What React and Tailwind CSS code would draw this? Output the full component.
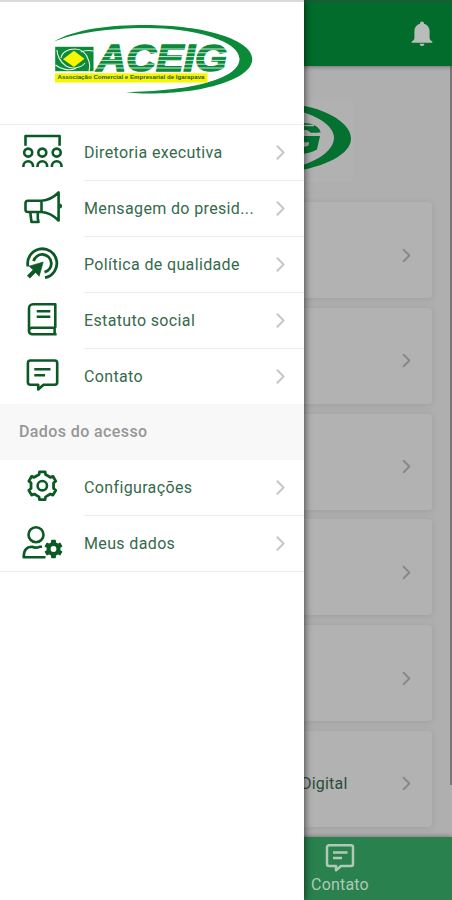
import { ChevronRight } from 'lucide-react';

// Gear outline with soft teeth, centred on cx/cy
function gearPath(cx, cy, outer, inner, teeth) {
  const step = (Math.PI * 2) / teeth;
  const points = [];
  for (let i = 0; i < teeth; i++) {
    const a = i * step - Math.PI / 2;
    [[-0.27, inner], [-0.19, outer], [0.19, outer], [0.27, inner]].forEach(([k, r]) => {
      points.push(`${(cx + r * Math.cos(a + k * step)).toFixed(2)} ${(cy + r * Math.sin(a + k * step)).toFixed(2)}`);
    });
  }
  return `M${points.join('L')}Z`;
}

function MenuIcon({ children }) {
  return (
    <svg viewBox="0 0 48 40" className="h-10 w-12 shrink-0" fill="none" stroke="#0b5a26" strokeWidth="2.6" strokeLinejoin="round">
      {children}
    </svg>
  );
}

const icons = {
  board: (
    <MenuIcon>
      <path d="M7.5 12.8V3H41.6V12.8" />
      {[10.2, 24.3, 38.7].map((x) => (
        <g key={x}>
          <circle cx={x} cy="19.6" r="4" />
          <path d={`M${x - 4.8} 34v-1a4.8 4.8 0 0 1 9.6 0v1`} />
        </g>
      ))}
    </MenuIcon>
  ),
  megaphone: (
    <MenuIcon>
      <path d="M23.5 11.7H10a2.5 2.5 0 0 0-2.5 2.5V20.5a2.5 2.5 0 0 0 2.5 2.5H23.5ZM23.5 11.7C30 11.3 36 8 40.6 3.5V31.5C36 27 30 23.5 23.5 23M12.3 23.5L13.5 33H20.5L19.8 29.5V23.5" />
      <path d="M41.5 14.5a2.5 2.5 0 0 1 0 5z" fill="#0b5a26" stroke="none" />
    </MenuIcon>
  ),
  target: (
    <MenuIcon>
      <path d="M10 21.5A14.6 14.6 0 1 1 27 32.7M15.6 16.2A9 9 0 1 1 26.5 27.2" strokeWidth="2.8" />
      <path d="M25.2 17L11 21.2L15.2 24.8L9.3 30.6L11.8 33.2L17.6 27.4L21.2 31.3Z" fill="#0b5a26" strokeWidth="0.6" />
    </MenuIcon>
  ),
  book: (
    <MenuIcon>
      <path d="M37.3 26.7V3.3H15a4 4 0 0 0-4 4V29.8M37.3 26.7H14.2a3.2 3.2 0 0 0 0 6.5H38.6M36.6 26.7V33M18.7 10.3H32.3M18.7 15.7H32.3" />
    </MenuIcon>
  ),
  chat: (
    <MenuIcon>
      <path d="M12.4 3.5H36.7a2.5 2.5 0 0 1 2.5 2.5V25.3a2.5 2.5 0 0 1-2.5 2.5H25.5L20.2 32.4V27.8H12.4a2.5 2.5 0 0 1-2.5-2.5V6a2.5 2.5 0 0 1 2.5-2.5ZM16.3 12.2H32.5M16.3 18.2H27" />
    </MenuIcon>
  ),
  gear: (
    <MenuIcon>
      <path d={gearPath(24.3, 17.7, 14.2, 11.6, 6)} strokeWidth="2.8" />
      <circle cx="24.3" cy="17.7" r="4.7" />
    </MenuIcon>
  ),
  userGear: (
    <MenuIcon>
      <circle cx="18" cy="10.7" r="7.5" />
      <path d="M27.5 33.3H5.7C5.7 26 9 22.8 14 22.8C17 24 19 24 21.5 22.8H24" />
      <path d={gearPath(35.5, 25, 8.6, 6.4, 6)} fill="#0b5a26" strokeWidth="1.4" />
      <circle cx="35.5" cy="25" r="2.9" fill="#fff" stroke="none" />
    </MenuIcon>
  ),
};

const mainLinks = [
  { icon: 'board', label: 'Diretoria executiva' },
  { icon: 'megaphone', label: 'Mensagem do presid...' },
  { icon: 'target', label: 'Política de qualidade' },
  { icon: 'book', label: 'Estatuto social' },
  { icon: 'chat', label: 'Contato' },
];

const accessLinks = [
  { icon: 'gear', label: 'Configurações' },
  { icon: 'userGear', label: 'Meus dados' },
];

const cards = ['', '', '', '', '', 'Digital'];

function Logo() {
  return (
    <svg viewBox="50 20 206 78" className="h-[78px] w-[206px]">
      <path
        d="M54 41.5C75 29 110 25 145 25C205 25 252.3 40 252.3 59C252.3 80 200 94 148 93.5C142 93.5 134 93.5 126 92C185 91.5 239.5 80 239.5 59C239.5 41 195 28 145 28C110 28 75 33 54 41.5Z"
        fill="#0b8a3a"
      />
      <rect x="55.2" y="46.8" width="38.3" height="24.4" fill="#0b8a3a" />
      <path d="M74 50.8L84.5 58.8L74 67L63 59.2Z" fill="#f6f600" />
      <g fill="none" stroke="#e9f5e6" strokeWidth="1.1">
        <path d="M61 58C62 52 68 49 75 49C81 49 86 53 88 59C90 63 90 67 89 71" />
        <path d="M93.5 51C88 50 84 50.500 81 52M57 50C57 55 60 62 66 66C72 69.500 81 68 85 63" />
        <path d="M55.500 65C61 69.500 69 71 76 68.500" />
      </g>
      <text x="96.500" y="71.200" fontFamily="Liberation Sans, sans-serif" fontSize="36" fontWeight="700" fontStyle="italic" textLength="130.500" lengthAdjust="spacingAndGlyphs" fill="#0b8a3a" stroke="#0b8a3a" strokeWidth="1.500">
        ACEIG
      </text>
      <path d="M96 49H230M96 52.800H230M96 56.600H230M96 60.400H230M96 64.200H230M96 68H230" stroke="#fff" strokeWidth="0.800" />
      <rect x="55" y="73.300" width="152.500" height="9.200" fill="#f6f600" />
      <text x="57.500" y="79.400" fontFamily="Liberation Sans, sans-serif" fontSize="5.300" fontWeight="700" textLength="147" lengthAdjust="spacingAndGlyphs" fill="#285c10">
        Associação Comercial e Empresarial de Igarapava
      </text>
    </svg>
  );
}

// Only the right end of the logo stays visible beside the open drawer
function LogoEnd() {
  return (
    <svg viewBox="0 0 83 82" className="h-[82px] w-[83px] shrink-0">
      <path d="M20 4C50 6 81 21 81 38.500C81 54 56 67 20 72V68.500C46 63 64 51 64 37.500C64 26 47 14 20 9Z" fill="#047130" />
      <text x="9" y="52.500" fontFamily="Liberation Sans, sans-serif" fontSize="43" fontWeight="700" fontStyle="italic" textLength="42" lengthAdjust="spacingAndGlyphs" fill="#047130" stroke="#047130" strokeWidth="1.800">
        G
      </text>
      <path d="M20 25.500H44M20 33.500H54" stroke="#b1b1b1" strokeWidth="1.600" />
    </svg>
  );
}

function MenuList({ links, lastBorder }) {
  return (
    <ul>
      {links.map((link, i) => {
        const last = i === links.length - 1;
        return (
          <li key={link.label} className={`flex pl-[18px] ${last && !lastBorder ? 'h-[55px]' : 'h-14'} ${last && lastBorder ? 'border-b border-[#ececec]' : ''}`}>
            <div className="pt-2">{icons[link.icon]}</div>
            <div className={`ml-[18px] flex flex-1 items-center justify-between pr-3 ${last ? '' : 'border-b border-[#ececec]'}`}>
              <span className="text-base tracking-[0.36px] whitespace-nowrap text-[#356a4c]">{link.label}</span>
              <ChevronRight className="-mr-px size-[25px] shrink-0 text-[#c6c6c6]" strokeWidth={1.8} />
            </div>
          </li>
        );
      })}
    </ul>
  );
}

export default function App() {
  return (
    <div className="relative h-[900px] w-[452px] overflow-hidden bg-white font-['Roboto',sans-serif]">
      <div className="flex h-full flex-col bg-[#afafaf]">
        <header className="z-10 flex h-[66px] shrink-0 items-center justify-end border-t-2 border-[#1a5c35] bg-[#016c2b] pr-[19px] shadow-[0_1px_4px_rgba(0,0,0,0.35)]">
          <svg viewBox="0 0 22 26" className="h-[26px] w-[22px]" fill="#b9bdb9">
            <path d="M11 0.5c1.2 0 2 .9 2 2.2c3.6 1 5.6 4 5.6 7.8v6.3c0 1.8 1 2.8 2.7 3.6v1.4H.7v-1.4c1.7-.8 2.7-1.8 2.7-3.6v-6.3c0-3.8 2-6.8 5.6-7.8C9 1.4 9.8.5 11 .5ZM8.7 22.7h4.6c0 1.4-1 2.3-2.3 2.3s-2.3-.9-2.3-2.3Z" />
          </svg>
        </header>

        <main className="flex min-h-0 flex-1 justify-between overflow-hidden">
          <div className="flex w-[432px] flex-col pl-5">
            <div className="mt-[34px] mb-5 ml-[69px] flex h-[82px] w-[264px] shrink-0 items-center justify-end bg-[#b1b1b1]">
              <LogoEnd />
            </div>
            <div className="flex flex-col gap-[9.8px]">
              {cards.map((label, i) => (
                <div key={i} className="flex h-24 shrink-0 items-center justify-between rounded-[4px] bg-[#b2b2b2] pr-[14px] pl-[281px] shadow-[0_1px_7px_rgba(0,0,0,0.1)]">
                  <span className="mt-[10px] text-base tracking-[0.2px] text-[#2b4d39]">{label}</span>
                  <ChevronRight className="mt-[10px] size-[23px] text-[#888]" strokeWidth={2} />
                </div>
              ))}
            </div>
          </div>
          <div className="h-[719px] w-0.5 bg-[#777]" />
        </main>

        <nav className="z-10 flex h-[63px] shrink-0 bg-[#29814d] pl-[302px] shadow-[0_-1px_4px_rgba(0,0,0,0.3)]">
          <div className="flex w-[76px] flex-col items-center pt-1.5">
            <svg viewBox="0 0 30 30" className="size-[30px]" fill="none" stroke="#b0c9b9" strokeWidth="2.5" strokeLinejoin="round">
              <path d="M4 2.3H26a2 2 0 0 1 2 2V21a2 2 0 0 1-2 2H16L11 27.3V23H4a2 2 0 0 1-2-2V4.3a2 2 0 0 1 2-2ZM8 9.5H22.5M8 15H17" />
            </svg>
            <span className="mt-0.5 text-base leading-5 tracking-[0.2px] text-[#b0c9b9]">Contato</span>
          </div>
        </nav>
      </div>

      <aside className="absolute inset-y-0 left-0 z-20 w-[304px] border-t-2 border-[#dadada] bg-white shadow-[1px_0_7px_rgba(0,0,0,0.6)]">
        <div className="flex h-[123px] items-start border-b border-[#ececec] pt-[18px] pl-[50px]">
          <Logo />
        </div>
        <MenuList links={mainLinks} />
        <h2 className="flex h-14 items-center bg-[#f8f8f8] pl-[19px] text-base font-medium tracking-[0.4px] text-[#969696]">Dados do acesso</h2>
        <MenuList links={accessLinks} lastBorder />
      </aside>
    </div>
  );
}
